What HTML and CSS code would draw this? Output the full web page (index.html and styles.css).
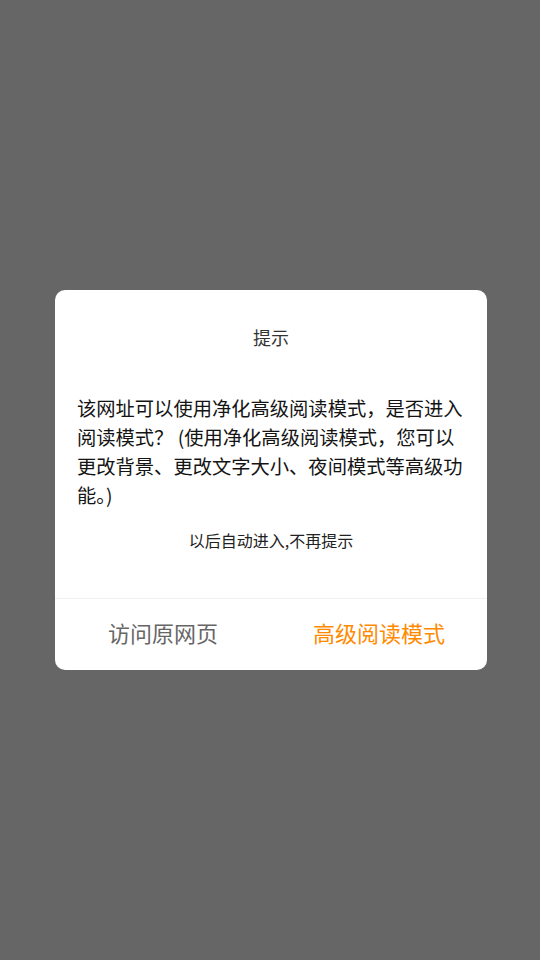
FILE: index.html
```html
<!DOCTYPE html>
<html lang="zh-CN">
<head>
<meta charset="utf-8">
<link rel="stylesheet" href="styles.css">
</head>
<body>
<div class="screen">
  <div class="dialog">
    <div class="title">提示</div>
    <div class="message">该网址可以使用净化高级阅读模式，是否进入阅读模式？ (使用净化高级阅读模式，您可以更改背景、更改文字大小、夜间模式等高级功能。)</div>
    <div class="auto">以后自动进入,不再提示</div>
    <div class="actions">
      <div class="btn btn-plain">访问原网页</div>
      <div class="btn btn-accent">高级阅读模式</div>
    </div>
  </div>
</div>
</body>
</html>
```

FILE: styles.css
```css
html, body {
  margin: 0;
  padding: 0;
}
body {
  font-family: "Noto Sans CJK SC", "Noto Sans", sans-serif;
  background: #666666;
}
.screen {
  width: 540px;
  height: 960px;
  display: flex;
  align-items: center;
  justify-content: center;
}
.dialog {
  width: 432px;
  margin-left: 2px;
  background: #ffffff;
  border-radius: 10px;
  display: flex;
  flex-direction: column;
}
.title {
  font-size: 18px;
  color: #333333;
  text-align: center;
  padding-top: 34px;
  line-height: 26px;
}
.message {
  font-size: 19.3px;
  line-height: 29px;
  color: #141414;
  padding: 44px 22px 0 22px;
  text-align: left;
}
.auto {
  font-size: 16px;
  color: #222222;
  text-align: center;
  line-height: 22px;
  margin-top: 19px;
  margin-bottom: 47px;
}
.actions {
  display: flex;
  border-top: 1px solid #f0f0f0;
  height: 72px;
  padding-bottom: 6px;
  box-sizing: border-box;
}
.btn {
  flex: 1;
  display: flex;
  align-items: center;
  justify-content: center;
  font-size: 22px;
}
.btn-plain {
  color: #666666;
}
.btn-accent {
  color: #ff8a00;
}
```
